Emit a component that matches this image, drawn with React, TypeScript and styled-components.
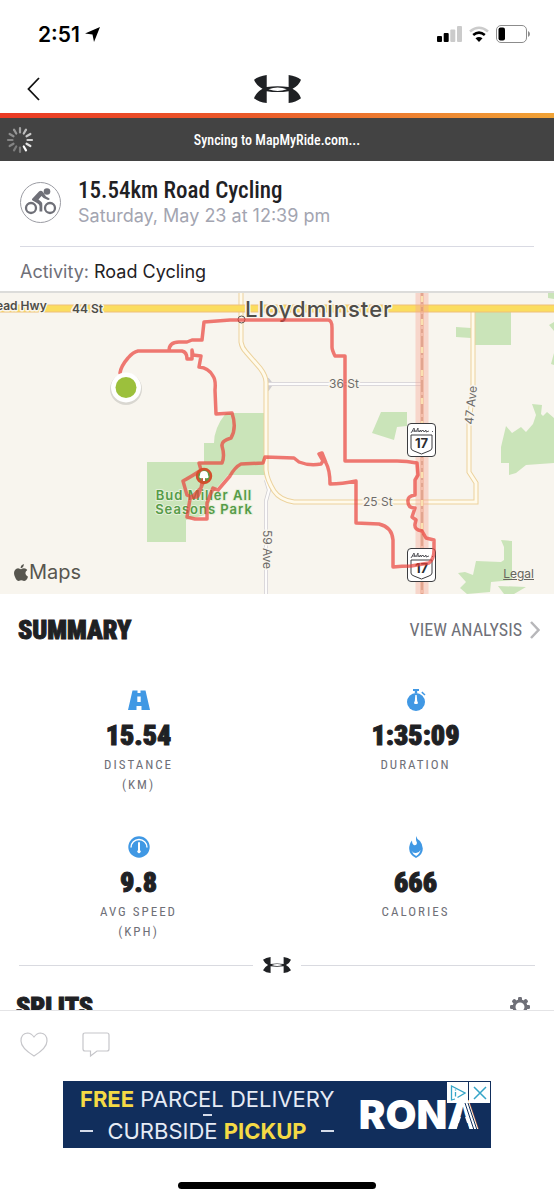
import React from "react";
import styled, { createGlobalStyle } from "styled-components";

const ink = "#1f2124";
const grey = "#6f7078";
const navy = "#112e5c";
const narrow = `"Roboto Condensed", "Liberation Sans Narrow", "Liberation Sans", sans-serif`;
const sans = `Inter, "Liberation Sans", sans-serif`;

const GlobalStyle = createGlobalStyle`
  * { box-sizing: border-box; }
  body { margin: 0; background: #fff; color: ${ink}; font-family: ${sans}; }
  button { border: 0; padding: 0; background: none; font: inherit; color: inherit; cursor: pointer; }
  svg { display: block; flex: none; }
  h1, h2, p, dl, dd { margin: 0; }
`;

const Screen = styled.div`
  display: flex;
  flex-direction: column;
  height: 100vh;
  overflow: hidden;
`;

const StatusBar = styled.div`
  display: flex;
  align-items: center;
  justify-content: space-between;
  height: 64px;
  padding: 4px 24px 0 38px;
`;

const Clock = styled.div`
  display: flex;
  align-items: center;
  gap: 5px;
  font-size: 21px;
  font-weight: 600;
  color: #000;
`;

const StatusIcons = styled.div`
  display: flex;
  align-items: center;
  gap: 7px;
`;

const NavBar = styled.nav`
  display: grid;
  grid-template-columns: 48px 1fr 48px;
  align-items: center;
  justify-items: center;
  height: 49px;
  padding: 1px 9px 0;
`;

const Accent = styled.div`
  height: 5px;
  background: linear-gradient(90deg, #ea3a24 0%, #ea5a2a 45%, #f0a336 100%);
`;

const SyncBar = styled.div`
  display: grid;
  grid-template-columns: 28px 1fr 28px;
  align-items: center;
  height: 43px;
  padding: 0 6px;
  background: #434343;
  color: #fff;
  font: 500 14px/20px ${narrow};
  text-align: center;
`;

const Content = styled.main`
  flex: 1;
  min-height: 0;
  overflow: hidden;
`;

const WorkoutHeader = styled.header`
  display: flex;
  align-items: center;
  gap: 17px;
  height: 86px;
  margin: 0 20px;
  padding-bottom: 2px;
  border-bottom: 1px solid #d9dae3;
`;

const Title = styled.h1`
  font: 500 23px/26px ${narrow};
`;

const Subtitle = styled.p`
  font-size: 18px;
  line-height: 24px;
  color: #a3a5b1;
`;

const ActivityRow = styled.p`
  height: 46px;
  padding: 0 20px;
  font-size: 18px;
  line-height: 50px;
  border-bottom: 2px solid #dcdcda;
`;

const Muted = styled.span`
  color: ${grey};
`;

const MapArea = styled.section`
  position: relative;
  height: 301px;
  background: #f8f5ee;
`;

const MapDrawing = styled.svg`
  width: 100%;
  height: 100%;
`;

const MapBrand = styled.div`
  position: absolute;
  left: 14px;
  bottom: 10px;
  display: flex;
  align-items: center;
  gap: 1px;
  font-size: 20px;
  line-height: 24px;
  color: #57564f;
`;

const LegalLink = styled.a`
  position: absolute;
  right: 20px;
  bottom: 12px;
  font-size: 12px;
  line-height: 16px;
  color: #66645e;
`;

const SectionHead = styled.div`
  display: flex;
  align-items: center;
  justify-content: space-between;
  height: 72px;
  padding: 0 14px 0 18px;
`;

const SectionTitle = styled.h2`
  font: 900 26px/32px ${narrow};
  -webkit-text-stroke: 1px ${ink};
`;

const AnalysisButton = styled.button`
  display: flex;
  align-items: center;
  gap: 8px;
  && { font: 400 18px/24px ${narrow}; }
  && { color: ${grey}; }
`;

const Stats = styled.dl`
  display: grid;
  grid-template-columns: 1fr 1fr;
  row-gap: 41px;
  padding-top: 23px;
`;

const Stat = styled.div`
  display: flex;
  flex-direction: column;
  align-items: center;
`;

const StatValue = styled.dd`
  order: 1;
  margin: 10px 0 4px;
  font: 900 28px/30px ${narrow};
  -webkit-text-stroke: 1px ${ink};
`;

const StatLabel = styled.dt`
  order: 2;
  font: 400 13px/20px ${narrow};
  letter-spacing: 2px;
  color: ${grey};
  text-align: center;
  white-space: pre-line;
`;

const Divider = styled.div`
  display: flex;
  align-items: center;
  gap: 10px;
  margin: 15px 19px 18px;
  &::before, &::after {
    content: "";
    flex: 1;
    height: 1px;
    background: #d9dae0;
  }
`;

const SplitsHead = styled(SectionHead)`
  height: 32px;
  padding: 0 24px 0 16px;
`;

const Footer = styled.footer`
  display: flex;
  flex-direction: column;
  align-items: center;
  height: 190px;
  border-top: 1px solid #e4e4e6;
`;

const Actions = styled.div`
  align-self: stretch;
  display: flex;
  align-items: flex-start;
  gap: 34px;
  height: 70px;
  padding: 21px 20px 0;
`;

const Ad = styled.aside`
  position: relative;
  display: flex;
  align-items: center;
  justify-content: space-between;
  width: 428px;
  height: 67px;
  padding: 0 12px 0 17px;
  background: ${navy};
`;

const AdCopy = styled.div`
  width: 254px;
  font-size: 22px;
  line-height: 24px;
  white-space: nowrap;
  color: #e6ebf5;
`;

const AdLine = styled.div`
  display: flex;
  align-items: center;
  justify-content: space-between;
  b { color: #f4da45; }
`;

const AdDash = styled.span`
  width: 13px;
  height: 2px;
  background: #d5dcea;
`;

const AdSeparator = styled(AdDash)`
  display: block;
  width: 9px;
  margin: 3px auto;
`;

const AdBrand = styled.div`
  position: relative;
  font-size: 40px;
  line-height: 40px;
  font-weight: 900;
  color: #fff;
`;

const BrandStripes = styled.svg`
  position: absolute;
  right: 0;
  top: 6px;
`;

const AdControls = styled.div`
  position: absolute;
  top: 1px;
  right: 1px;
  display: flex;
  gap: 1px;
`;

const AdButton = styled.button`
  && { background: #fff; }
  width: 21px;
  height: 21px;
  display: grid;
  place-items: center;
`;

const HomeIndicator = styled.div`
  width: 198px;
  height: 7px;
  margin-top: 34px;
  border-radius: 4px;
  background: #000;
`;

const BrandMark = ({ width, height }: { width: number; height: number }) => (
  <svg width={width} height={height} viewBox="0 0 133 81" preserveAspectRatio="none" aria-hidden>
    <path
      fill={ink}
      fillRule="evenodd"
      d="M0 14Q14 3 36 0V35Q66 30 98 35V0Q120 3 133 14Q128 30 109 40Q128 51 133 67Q118 79 98 81V47Q66 52 36 47V81Q14 79 0 67Q6 51 24 40Q6 30 0 14ZM41 41Q67 31 93 41Q67 51 41 41Z"
    />
  </svg>
);

const Spinner = () => (
  <svg width="28" height="28" viewBox="-14 -14 28 28" stroke="#fff" strokeWidth="2.2" strokeLinecap="round">
    {[0.5, 0.65, 0.7, 0.75, 0.85, 1, 0.3, 0.3, 0.35, 0.35, 0.4, 0.45].map((o, i) => (
      <path key={i} d="M0-7.5V-12" opacity={o} transform={`rotate(${i * 30})`} />
    ))}
  </svg>
);

const CyclistIcon = () => (
  <svg width="41" height="41" viewBox="0 0 41 41" fill="none" stroke={grey}>
    <circle cx="20.5" cy="20.5" r="20" stroke="#9b9ca3" />
    <g strokeWidth="2.3">
      <circle cx="11" cy="26" r="5" />
      <circle cx="30" cy="26" r="5" />
    </g>
    <circle cx="27" cy="9.5" r="3.3" fill={grey} stroke="none" />
    <path fill={grey} stroke="none" d="M12 17L19 9.5Q21 8 23 10L26 14.500L29.500 16.500Q30 18 28 18L23.500 16L21.500 14L18.500 17.500L21.500 20Q22.500 21 22.300 23V29.500H19.500V24Q19.500 22.500 17 21L13 18.800Q11.500 18 12 17Z" />
  </svg>
);

const Shield = ({ y }: { y: number }) => (
  <g transform={`translate(407 ${y})`}>
    <rect x="0.500" y="0.500" width="28" height="33" rx="3.500" fill="#fff" stroke="#3c3d40" />
    <path d="M4 10L7 5L8 9M5 8H9M9 9L11 5V9M12 7V9L14 7V9L16 7L17 9L19 7V9L22 8M25 8.500H26" fill="none" stroke="#4a4b50" strokeWidth="0.900" />
    <path d="M4 12H25V25Q25 27 22 28L14.500 31L7 28Q4 27 4 25Z" fill="#fff" stroke="#3c3d40" />
    <text x="14.500" y="25" fontSize="13" fontWeight="700" textAnchor="middle" fill="#2c2d31">17</text>
  </g>
);

const roads59 = "M241 290V342Q242 348 246 352L260 368Q266 376 266 382V470Q267 480 274 491Q280 500 294 502H476V483L469 472V424L473 388V311";
const routeLine =
  "M120 373Q121 366 128 358Q133 352 138 351H182Q187 352 187 359H192V350L193 355L201 356L199 367Q209 368 213 376Q216 380 215 390L216 414L232 413Q237 428 231 438Q221 441 222 446Q225 456 222 463H199L201 470Q194 475 183 481L187 495Q194 499 198 496L204 480M203 478L201 488L190 499L187 517L195 519L207 519L207 503L213 488L218 490L230 476Q235 467 241 464L263 463L265 457L294 458L299 462Q309 466 321 464L323 461L319 454L322 453L326 463Q330 470 330 484Q342 484 356 481V523L379 524Q392 527 393 540V567Q402 566 411 566L429 563Q434 559 434 550V540L426 538L422 531Q414 530 415 524L416 520L412 517L415 508Q408 508 408 502Q407 496 415 495L415 480L418 475L417 463Q407 461 397 461L345 461V356H335Q332 350 332 347V328Q332 320 328 320H230L204 322L202 340L192 340L187 342L179 342Q169 342 169 351";

const RouteMap = () => (
  <MapDrawing viewBox="0 293 554 301" preserveAspectRatio="xMidYMid slice" fontFamily="Inter, sans-serif" role="img" aria-label="Route map">
    <g fill="#cae4b9">
      <path d="M147 462H204V443H214Q214 428 226 413H265V475H228L215 490L205 515L186 520V542H147Z" />
      <path d="M474 312H511V345H474ZM456 327L471 328V338L456 337ZM381 412H407V426L397 427L394 440L372 433Z" />
      <path d="M532 404L542 405L541 414L543 416L547 412L554 418V463L526 465L516 473L509 475V463L501 463V447L506 426L512 433L521 427L526 432L533 424L536 415Z" />
      <path d="M501 540L512 541V580L491 582L490 592L467 594L460 588L466 582L458 573L465 572L473 575L476 561L501 562L504 560V547ZM498 586L526 587L514 594H504Z" />
      <path d="M548 292H554V299L548 298ZM549 325L554 322V331ZM551 364L554 353V365Z" />
    </g>
    <g fill="none">
      <path d="M266 384H421M266 480L269 490L266 501V594M267 379L271 384L267 390" stroke="#cfcdd0" strokeWidth="4" />
      <path d="M266 384H421M266 480L269 490L266 501V594" stroke="#fdfcfb" strokeWidth="2.500" />
      <path d={roads59} stroke="#ecd29c" strokeWidth="5" />
      <path d={roads59} stroke="#fffaeb" strokeWidth="3" />
      <path d="M0 308.500H554" stroke="#eebf7b" strokeWidth="8" />
      <path d="M0 308.500H554" stroke="#fbdd5f" strokeWidth="6" />
      <path d="M422 292V594" stroke="#f5a795" strokeOpacity="0.400" strokeWidth="13" />
      <path d="M422 292V594" stroke="#efa389" strokeOpacity="0.500" strokeWidth="4" />
      <path d="M422 292V594" stroke="#d08d74" strokeWidth="1" strokeDasharray="12 3 4 3" />
      <path d="M422 296V594" stroke="#fae0b0" strokeWidth="2.500" strokeDasharray="6 17 6 22" />
    </g>
    <g stroke="#f8f5ee" strokeWidth="3" strokeLinejoin="round" paintOrder="stroke" fill="#4f4d48">
      <text x="-4" y="310" fontSize="12" fontWeight="600">ead Hwy</text>
      <text x="72" y="313" fontSize="12" fontWeight="600">44 St</text>
      <text x="245" y="317" fontSize="22" fontWeight="500" letterSpacing="1">Lloydminster</text>
      <g fill="#6f6c69">
        <text x="329" y="388" fontSize="12">36 St</text>
        <text x="363" y="506" fontSize="12">25 St</text>
        <text transform="translate(263 530) rotate(90)" fontSize="12">59 Ave</text>
        <text transform="translate(473 425) rotate(-84)" fontSize="12">47 Ave</text>
      </g>
      <g fill="#559b48" stroke="#e5efd9" strokeWidth="2" fontSize="13" fontWeight="600" letterSpacing="1" textAnchor="middle">
        <text x="204" y="500">Bud Miller All</text>
        <text x="204" y="514">Seasons Park</text>
      </g>
    </g>
    <circle cx="241.500" cy="319.500" r="3.500" fill="#f8f5ee" stroke="#5d524d" />
    <circle cx="204" cy="476" r="7" fill="#58a046" />
    <Shield y={423} />
    <Shield y={548} />
    <g fill="none" stroke="#e9423a" strokeOpacity="0.700" strokeWidth="3.500" strokeLinejoin="round" strokeLinecap="round">
      <path d={routeLine} />
    </g>
    <circle cx="204" cy="476" r="7" fill="none" stroke="#d3502d" strokeWidth="2.500" />
    <path d="M204 471Q208 471 208 475Q210 479 205 478V481H203V478Q198 479 200 475Q200 471 204 471Z" fill="#fff" />
    <circle cx="126" cy="389" r="16" fill="#000" opacity="0.120" />
    <circle cx="126" cy="387.500" r="15" fill="#fff" />
    <circle cx="126" cy="387.500" r="10.500" fill="#9cc03c" />
  </MapDrawing>
);

const blue = "#4098e4";

const RoadIcon = () => (
  <svg width="22" height="22" viewBox="0 0 22 22" fill={blue}>
    <path fillRule="evenodd" d="M4.500 1.500H9.500V4H12.500V1.500H17.500L22 21H13.500V17H8.500V21H0ZM9.300 7.500V13H12.700V7.500Z" />
  </svg>
);

const StopwatchIcon = () => (
  <svg width="22" height="22" viewBox="0 0 22 22" fill={blue}>
    <path d="M8 0H14V2H12.200V4H9.800V2H8ZM17.300 2.500L20.500 5.500L19.500 6.500L16.300 3.700Z" />
    <circle cx="11" cy="13" r="9" />
    <path d="M10.300 6H11.700L12.200 12Q13.500 13.500 12.500 15H9.500Q8.500 13.500 9.800 12Z" fill="#fff" />
  </svg>
);

const GaugeIcon = () => (
  <svg width="22" height="22" viewBox="0 0 22 22" fill="none" stroke="#fff">
    <circle cx="11" cy="11" r="10.700" fill={blue} stroke="none" />
    <path d="M3 11.500A8 8 0 0 1 19 11.500" strokeWidth="1.400" />
    <path d="M11 7V16" strokeWidth="2" strokeLinecap="round" />
    <circle cx="11" cy="15.500" r="1.300" fill="#fff" />
  </svg>
);

const FlameIcon = () => (
  <svg width="22" height="22" viewBox="0 0 22 22" fill={blue}>
    <path d="M11 0Q10.500 4 12 7Q11.500 9.500 9.500 9.200Q7 8.500 7 4.500Q4 8 4.200 13Q4.500 19 11 22Q18 18.500 17.800 12.500Q17.500 8 15 5Q12 3.500 11 0Z" />
    <path d="M6.500 14.500Q8 17.500 11 17Q14.500 16.500 15.500 14Q15 17.500 11.200 20Q7.500 18 6.500 14.500Z" fill="#fff" />
  </svg>
);

const GearIcon = () => (
  <svg width="20" height="20" viewBox="-10 -10 20 20" fill={grey}>
    {[0, 45, 90, 135, 180, 225, 270, 315].map((a) => (
      <rect key={a} x="-2" y="-10" width="4" height="6" rx="1.200" transform={`rotate(${a})`} />
    ))}
    <circle r="6" fill="#fff" stroke={grey} strokeWidth="3" />
  </svg>
);

const stats = [
  { icon: <RoadIcon />, value: "15.54", label: "DISTANCE\n(KM)" },
  { icon: <StopwatchIcon />, value: "1:35:09", label: "DURATION" },
  { icon: <GaugeIcon />, value: "9.8", label: "AVG SPEED\n(KPH)" },
  { icon: <FlameIcon />, value: "666", label: "CALORIES" },
];

export default function App() {
  return (
    <Screen>
      <GlobalStyle />
      <StatusBar>
        <Clock>
          2:51
          <svg width="15" height="15" viewBox="0 0 15 15"><path d="M15 0L9 15L7.500 7.500L0 6.500Z" fill="#000" /></svg>
        </Clock>
        <StatusIcons>
          <svg width="25" height="16" viewBox="0 0 25 16">
            <rect y="10" width="5" height="6" rx="1" />
            <rect x="6.700" y="7" width="5" height="9" rx="1" />
            <rect x="13.300" y="3.500" width="5" height="12.500" rx="1" fill="#cbcbcb" />
            <rect x="20" width="5" height="16" rx="1" fill="#cbcbcb" />
          </svg>
          <svg width="20" height="16" viewBox="0 0 20 16" fill="none" strokeWidth="2.600">
            <path d="M1 5.500Q10-2 19 5.500" stroke="#cbcbcb" />
            <path d="M4.200 9Q10 4.200 15.800 9" stroke="#000" />
            <path d="M10 16L6.500 12.300Q10 9.500 13.500 12.300Z" fill="#000" />
          </svg>
          <svg width="34" height="18" viewBox="0 0 34 18">
            <rect x="0.500" y="0.500" width="30" height="17" rx="4.500" fill="none" stroke="#8c8c8c" />
            <rect x="2.500" y="2.500" width="6.500" height="13" rx="2" />
            <path d="M32 6Q34 7 34 9Q34 11 32 12Z" fill="#8c8c8c" />
          </svg>
        </StatusIcons>
      </StatusBar>
      <NavBar>
        <button aria-label="Back">
          <svg width="13" height="24" viewBox="0 0 13 24" fill="none" stroke="#111" strokeWidth="1.800"><path d="M12 1L1.500 12L12 23" /></svg>
        </button>
        <BrandMark width={47} height={28} />
      </NavBar>
      <Accent />
      <SyncBar role="status">
        <Spinner />
        <span>Syncing to MapMyRide.com...</span>
      </SyncBar>
      <Content>
        <WorkoutHeader>
          <CyclistIcon />
          <div>
            <Title>15.54km Road Cycling</Title>
            <Subtitle>Saturday, May 23 at 12:39 pm</Subtitle>
          </div>
        </WorkoutHeader>
        <ActivityRow><Muted>Activity:</Muted> Road Cycling</ActivityRow>
        <MapArea>
          <RouteMap />
          <MapBrand>
            <svg width="14" height="17" viewBox="0 0 14 17" fill="#57564f">
              <path d="M9.800 0Q10 2.200 8.500 3.500Q7.500 4.300 6.600 4.100Q6.600 1.200 9.800 0ZM7 5.200Q8.500 4.300 10 4.300Q12.300 4.500 13.300 6Q11.300 7.300 11.400 9.300Q11.500 11.800 14 12.700Q12.500 17 10 17Q8.500 16.200 7.200 16.200Q6 16.300 4.800 17Q2.500 17 1 13Q-1 8.500 1 6Q2.500 4 4.800 4.400Z" />
            </svg>
            Maps
          </MapBrand>
          <LegalLink href="#legal">Legal</LegalLink>
        </MapArea>
        <SectionHead>
          <SectionTitle>SUMMARY</SectionTitle>
          <AnalysisButton>
            VIEW ANALYSIS
            <svg width="10" height="18" viewBox="0 0 10 18" fill="none" stroke="#b7b7ba" strokeWidth="2.500"><path d="M1 1L8.500 9L1 17" /></svg>
          </AnalysisButton>
        </SectionHead>
        <Stats>
          {stats.map((s) => (
            <Stat key={s.value}>
              {s.icon}
              <StatLabel>{s.label}</StatLabel>
              <StatValue>{s.value}</StatValue>
            </Stat>
          ))}
        </Stats>
        <Divider><BrandMark width={28} height={16} /></Divider>
        <SplitsHead>
          <SectionTitle>SPLITS</SectionTitle>
          <button aria-label="Split settings"><GearIcon /></button>
        </SplitsHead>
      </Content>
      <Footer>
        <Actions>
          <button aria-label="Like">
            <svg width="28" height="26" viewBox="0 0 28 26" fill="none" stroke="#c6c6ca" strokeWidth="1.200"><path d="M14 5Q11 1 7.500 1Q1 1.500 1 9Q1 16 14 24Q27 16 27 9Q27 1.500 20.500 1Q17 1 14 5Z" /></svg>
          </button>
          <button aria-label="Comment">
            <svg width="28" height="26" viewBox="0 0 28 26" fill="none" stroke="#c6c6ca" strokeWidth="1.200"><path d="M3 1H25Q27 1 27 3V17Q27 19 25 19H15L8.500 24V19H3Q1 19 1 17V3Q1 1 3 1Z" /></svg>
          </button>
        </Actions>
        <Ad>
          <AdCopy>
            <AdLine><span><b>FREE</b> PARCEL DELIVERY</span></AdLine>
            <AdSeparator />
            <AdLine>
              <AdDash />
              <span>CURBSIDE <b>PICKUP</b></span>
              <AdDash />
            </AdLine>
          </AdCopy>
          <AdBrand>
            RONA
            <BrandStripes width="31" height="29" viewBox="0 0 31 29">
              <path d="M15 10L8.500 29H21.500Z" fill={navy} />
              <path d="M17 2L26 29M20 2L29 29" stroke={navy} fill="none" />
            </BrandStripes>
          </AdBrand>
          <AdControls>
            <AdButton aria-label="Ad choices">
              <svg width="16" height="16" viewBox="0 0 16 16" fill="none" stroke="#35a5c8" strokeWidth="1.300"><path d="M5 14L1.500 15V1L15 8L7.500 12.500M5.500 7V11.500M5.500 4.500V5.500" /></svg>
            </AdButton>
            <AdButton aria-label="Close ad">
              <svg width="14" height="14" viewBox="0 0 14 14" stroke="#35a5c8" strokeWidth="1.500"><path d="M1 1L13 13M13 1L1 13" /></svg>
            </AdButton>
          </AdControls>
        </Ad>
        <HomeIndicator />
      </Footer>
    </Screen>
  );
}
